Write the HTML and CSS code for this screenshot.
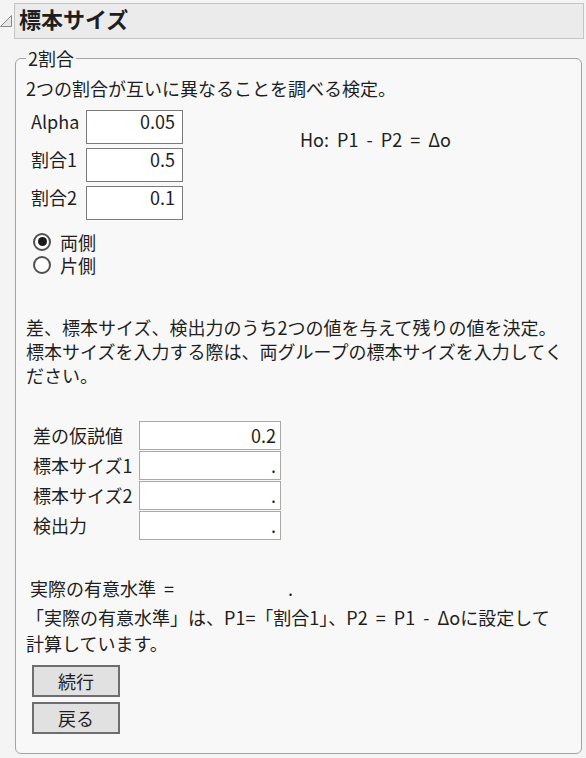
FILE: index.html
```html
<!DOCTYPE html>
<html lang="ja">
<head>
<meta charset="utf-8">
<title>標本サイズ</title>
<link rel="stylesheet" href="styles.css">
</head>
<body>
<div class="titlebar">
  <svg class="disclosure" width="12" height="12" viewBox="0 0 12 12"><polygon points="11.5,0.5 11.5,11.5 0.5,11.5" fill="#e6e6e6" stroke="#8a8a8a" stroke-width="1"/></svg>
  <h1 class="title">標本サイズ</h1>
</div>
<fieldset class="group">
  <legend>2割合</legend>
  <p class="intro">2つの割合が互いに異なることを調べる検定。</p>
  <div class="params">
    <div class="grid1">
      <label>Alpha</label><input type="text" value="0.05">
      <label>割合1</label><input type="text" value="0.5">
      <label>割合2</label><input type="text" value="0.1">
    </div>
    <div class="hypo">Ho: P1 - P2 = Δo</div>
  </div>
  <div class="radios" role="radiogroup">
    <div class="radio" role="radio" aria-checked="true"><span class="mark checked"></span><span>両側</span></div>
    <div class="radio" role="radio" aria-checked="false"><span class="mark"></span><span>片側</span></div>
  </div>
  <p class="note">差、標本サイズ、検出力のうち2つの値を与えて残りの値を決定。<br>標本サイズを入力する際は、両グループの標本サイズを入力してく<br>ださい。</p>
  <div class="grid2">
    <label>差の仮説値</label><input type="text" value="0.2">
    <label>標本サイズ1</label><input type="text" value=".">
    <label>標本サイズ2</label><input type="text" value=".">
    <label>検出力</label><input type="text" value=".">
  </div>
  <div class="result"><span>実際の有意水準 =</span><span class="res-val">.</span></div>
  <p class="note2">「実際の有意水準」は、P1=「割合1」、P2 = P1 - Δoに設定して<br>計算しています。</p>
  <div class="buttons">
    <button type="button">続行</button>
    <button type="button">戻る</button>
  </div>
</fieldset>
</body>
</html>
```
FILE: styles.css
```css
body {
  margin: 0;
  width: 586px;
  background: #f4f4f4;
  font-family: "Noto Sans CJK JP", "Noto Sans", sans-serif;
  font-size: 18px;
  color: #1e1e1e;
}

.titlebar {
  display: flex;
  align-items: flex-start;
  padding-top: 3px;
}

.disclosure {
  flex: none;
  margin: 12px 2px 0 0;
}

.title {
  flex: 1;
  margin: 0 2px 0 0;
  height: 36px;
  box-sizing: border-box;
  border: 1px solid #c4c4c4;
  background: #ebebeb;
  font-size: 22px;
  font-weight: bold;
  line-height: 28px;
  padding: 0 0 0 4px;
}

.group {
  margin: 7px 4px 0 15px;
  padding: 6px 7px 19px 10px;
  border: 1px solid #a3a3a3;
  border-radius: 6px;
  background: #f8f8f8;
  min-width: 0;
}

.group legend {
  padding: 0 2px;
  line-height: 24px;
  font-size: 18px;
}

.intro {
  margin: 0;
  line-height: 24px;
}

.params {
  display: flex;
  align-items: flex-start;
  margin-top: 10px;
}

.grid1 {
  display: grid;
  grid-template-columns: 55px 97px;
  row-gap: 4px;
  margin-left: 5px;
}

.grid1 label {
  line-height: 22px;
}

.grid1 input {
  width: 97px;
  height: 34px;
  box-sizing: border-box;
  margin: 0;
  border: 1px solid #7a7a7a;
  background: #fff;
  font: inherit;
  line-height: 20px;
  color: inherit;
  text-align: right;
  padding: 0 7px 12px 2px;
}

.hypo {
  margin: 17px 0 0 117px;
  line-height: 24px;
  word-spacing: 4px;
}

.radios {
  margin-top: 10px;
}

.radio {
  display: flex;
  align-items: center;
  height: 23px;
  line-height: 22px;
}

.mark {
  flex: none;
  width: 18px;
  height: 18px;
  box-sizing: border-box;
  margin: 0 9px 0 7px;
  border: 2px solid #505050;
  border-radius: 50%;
  background: #fff;
  display: flex;
  align-items: center;
  justify-content: center;
}

.mark.checked::before {
  content: "";
  width: 9px;
  height: 9px;
  border-radius: 50%;
  background: #1a1a1a;
}

.note {
  margin: 39px 0 0;
  line-height: 24px;
}

.grid2 {
  display: grid;
  grid-template-columns: 106px 142px;
  row-gap: 1px;
  margin: 34px 0 0 7px;
}

.grid2 label {
  line-height: 29px;
}

.grid2 input {
  width: 142px;
  height: 29px;
  box-sizing: border-box;
  margin: 0;
  border: 1px solid #a9a9a9;
  background: #fff;
  font: inherit;
  line-height: 22px;
  color: inherit;
  text-align: right;
  padding: 0 4px 1px 2px;
}

.result {
  display: flex;
  margin-top: 36px;
  padding-left: 4px;
  line-height: 24px;
  word-spacing: 4px;
}

.res-val {
  width: 119px;
  text-align: right;
}

.note2 {
  margin: 4px 0 0;
  line-height: 26px;
  word-spacing: 4px;
}

.buttons {
  display: flex;
  flex-direction: column;
  align-items: flex-start;
  gap: 5px;
  margin: 9px 0 0 6px;
}

.buttons button {
  width: 88px;
  height: 32px;
  box-sizing: border-box;
  margin: 0;
  padding: 0;
  border: 2px solid #6e6e6e;
  background: #e1e1e1;
  font: inherit;
  line-height: 26px;
  color: inherit;
}
```
